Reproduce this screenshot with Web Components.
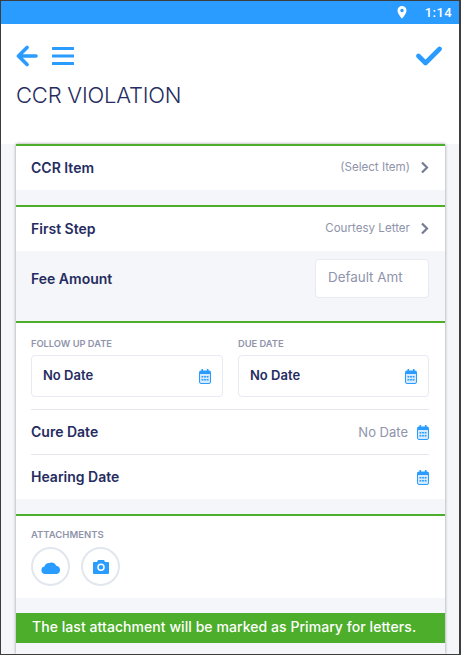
<!DOCTYPE html>
<html>
<head>
<meta charset="utf-8">
<title>CCR Violation</title>
<style>
  html, body { margin: 0; padding: 0; background: #fff; }
  body { font-family: "Inter", "Liberation Sans", sans-serif; color: #252c5f; }
</style>
</head>
<body>
<ccr-app>
  <status-bar slot="status" time="1:14"></status-bar>
  <app-header slot="header" heading="CCR VIOLATION"></app-header>

  <form-section>
    <nav-row label="CCR Item" value="(Select Item)"></nav-row>
  </form-section>

  <form-section flush>
    <nav-row label="First Step" value="Courtesy Letter"></nav-row>
    <fee-row label="Fee Amount" placeholder="Default Amt"></fee-row>
  </form-section>

  <form-section>
    <div style="display:grid;grid-template-columns:192px 191px;gap:15px;padding:0 16px 12px 15px;">
      <date-field label="FOLLOW UP DATE"></date-field>
      <date-field label="DUE DATE"></date-field>
    </div>
    <date-row label="Cure Date" value="No Date"></date-row>
    <date-row label="Hearing Date"></date-row>
  </form-section>

  <form-section>
    <attach-box label="ATTACHMENTS"></attach-box>
  </form-section>

  <note-banner>The last attachment will be marked as Primary for letters.</note-banner>
</ccr-app>

<script>
const CAL = `<svg width="12" height="15" viewBox="0 0 12 15" style="display:block">
  <rect x="2.5" y="0" width="1.6" height="3" fill="#2a9bff"/><rect x="7.9" y="0" width="1.6" height="3" fill="#2a9bff"/>
  <rect x="0.5" y="2" width="11" height="12.5" rx="1.5" fill="#d3eaff" stroke="#2a9bff"/>
  <rect x="0.5" y="2" width="11" height="3" fill="#2a9bff"/>
  <g fill="#2a9bff">
    <rect x="2.5" y="7" width="1.8" height="1.5"/><rect x="5.1" y="7" width="1.8" height="1.5"/><rect x="7.7" y="7" width="1.8" height="1.5"/>
    <rect x="2.5" y="10" width="1.8" height="1.5"/><rect x="5.1" y="10" width="1.8" height="1.5"/><rect x="7.7" y="10" width="1.8" height="1.5"/>
  </g></svg>`;

const CHEVRON = `<svg width="9" height="13" viewBox="0 0 9 13" style="display:block">
  <path d="M2 1.5 L7 6.5 L2 11.5" fill="none" stroke="#767c96" stroke-width="2.2"/></svg>`;

// small helper so each element doesn't repeat the same 3 lines
class Base extends HTMLElement {
  render(html) {
    if (!this.shadowRoot) this.attachShadow({ mode: 'open' });
    this.shadowRoot.innerHTML = html;
  }
  attr(name) { return this.getAttribute(name) || ''; }
}

class CcrApp extends Base {
  connectedCallback() {
    this.render(`<style>
      :host { display: block; box-sizing: border-box; width: 461px; height: 655px; overflow: hidden;
        border: 1px solid #3d3d3d; border-right-width: 2px; background: #f5f6fa; }
      .top { background: #fff; }
      .body { display: flex; flex-direction: column; width: 429px; margin: 0 0 0 15px; height: 510px;
        background: #f5f6fa; box-shadow: 0 0 3px rgba(0,0,0,.4); }
    </style>
    <div class="top"><slot name="status"></slot><slot name="header"></slot></div>
    <div class="body"><slot></slot></div>`);
  }
}

class StatusBar extends Base {
  connectedCallback() {
    this.render(`<style>
      :host { display: flex; align-items: center; justify-content: flex-end; gap: 18px; height: 23px; padding-right: 7px;
        box-sizing: border-box; background: #2a9bff; color: #fff; font: 500 13px Roboto, sans-serif; letter-spacing: .4px; }
      svg { display: block; }
    </style>
    <svg width="10" height="13" viewBox="0 0 11 15"><path fill-rule="evenodd" fill="#fff" d="M5.5 0A5.2 5.2 0 0 0 .3 5.2C.3 9 5.5 14.6 5.5 14.6S10.7 9 10.7 5.2A5.2 5.2 0 0 0 5.5 0Zm0 7.2a2 2 0 1 1 0-4 2 2 0 0 1 0 4Z"/></svg>
    <span>${this.attr('time')}</span>`);
  }
}

class AppHeader extends Base {
  connectedCallback() {
    this.render(`<style>
      :host { display: block; box-sizing: border-box; height: 120px; padding: 21px 17px 0 15px; background: #fff; }
      .tools { display: flex; align-items: center; height: 22px; }
      .tools svg { display: block; }
      .menu { margin-left: 14px; }
      .check { margin-left: auto; }
      h1 { margin: 14px 0 0; font: 300 22px/28px Inter, sans-serif; color: #252c5f; letter-spacing: -.2px; }
    </style>
    <div class="tools">
      <svg width="22" height="22" viewBox="0 0 22 22"><path d="M20 11H3 M11 2.5 L2.5 11 L11 19.5" fill="none" stroke="#2a9bff" stroke-width="3.6" stroke-linecap="round" stroke-linejoin="round"/></svg>
      <svg class="menu" width="22" height="20" viewBox="0 0 22 20"><path d="M1 2.5H21 M1 10H21 M1 17.5H21" fill="none" stroke="#2a9bff" stroke-width="3" stroke-linecap="round"/></svg>
      <svg class="check" width="26" height="20" viewBox="0 0 26 20"><path d="M2.5 10 L9.5 17 L23.5 3" fill="none" stroke="#2a9bff" stroke-width="4.6" stroke-linecap="round" stroke-linejoin="round"/></svg>
    </div>
    <h1>${this.attr('heading')}</h1>`);
  }
}

class FormSection extends Base {
  connectedCallback() {
    this.render(`<style>
      :host { display: block; background: #fff; border-top: 2px solid #4cae2a; margin-bottom: 15px; }
      :host([flush]) { margin-bottom: 0; }
    </style><slot></slot>`);
  }
}

class NavRow extends Base {
  connectedCallback() {
    this.render(`<style>
      :host { display: flex; align-items: center; height: 44px; padding: 0 16px 2px 15px; box-sizing: border-box; background: #fff; }
      .l { font: 600 14px Inter, sans-serif; color: #252c5f; }
      .v { margin-left: auto; margin-right: 10px; font: 400 11.6px Inter, sans-serif; color: #8f94ab; }
    </style><span class="l">${this.attr('label')}</span><span class="v">${this.attr('value')}</span>${CHEVRON}`);
  }
}

class FeeRow extends Base {
  connectedCallback() {
    this.render(`<style>
      :host { display: flex; align-items: flex-start; justify-content: space-between; height: 70px; padding: 8px 16px 0 15px; box-sizing: border-box; background: #f5f6fa; }
      .l { margin-top: 11px; font: 600 14px/18px Inter, sans-serif; color: #252c5f; }
      .box { box-sizing: border-box; width: 114px; height: 39px; padding: 8px 12px; background: #fff; border: 1px solid #e8eaf2; border-radius: 4px;
        font: 400 13.4px/18px Inter, sans-serif; color: #8f94ab; }
    </style><span class="l">${this.attr('label')}</span><div class="box">${this.attr('placeholder')}</div>`);
  }
}

class DateField extends Base {
  connectedCallback() {
    this.render(`<style>
      :host { display: block; padding-top: 15px; }
      .cap { font: 600 9.3px/12px Inter, sans-serif; color: #8f94ab; margin-bottom: 5px; }
      .box { display: flex; align-items: center; justify-content: space-between; box-sizing: border-box; height: 42px; padding: 0 11px 0 11px;
        border: 1px solid #e8eaf2; border-radius: 4px; font: 600 13px Inter, sans-serif; color: #252c5f; }
      span { margin-bottom: 2px; }
    </style><div class="cap">${this.attr('label')}</div><div class="box"><span>No Date</span>${CAL}</div>`);
  }
}

class DateRow extends Base {
  connectedCallback() {
    const v = this.attr('value');
    this.render(`<style>
      :host { display: block; padding: 0 16px 0 15px; }
      .row { display: flex; align-items: center; height: 44px; border-top: 1px solid #e4e6ee; }
      .l { font: 600 14px Inter, sans-serif; color: #252c5f; margin-bottom: 2px; }
      .v { margin-left: auto; margin-right: 9px; font: 400 13px Inter, sans-serif; color: #8f94ab; }
      .i { margin-left: auto; }
      .v + .i { margin-left: 0; }
    </style><div class="row"><span class="l">${this.attr('label')}</span>${v ? `<span class="v">${v}</span>` : ''}<span class="i">${CAL}</span></div>`);
  }
}

class AttachBox extends Base {
  connectedCallback() {
    this.render(`<style>
      :host { display: block; padding: 13px 15px 12px; }
      .cap { font: 600 9.5px/12px Inter, sans-serif; color: #8f94ab; margin-bottom: 6px; }
      .btns { display: flex; gap: 11px; }
      .c { display: flex; align-items: center; justify-content: center; box-sizing: border-box; width: 39px; height: 39px; border: 2px solid #e2e6ee; border-radius: 50%; }
    </style><div class="cap">${this.attr('label')}</div>
    <div class="btns">
      <div class="c"><svg width="20" height="14" viewBox="0 0 20 14"><path fill="#2a9bff" d="M4 14A3.8 3.8 0 0 1 3.4 6.5 4.8 4.8 0 0 1 8 3 5.2 5.2 0 0 1 15.3 5.8 4.2 4.2 0 0 1 16 14Z"/></svg></div>
      <div class="c"><svg width="16" height="14" viewBox="0 0 16 14"><path fill-rule="evenodd" fill="#2a9bff" d="M1 2H4L5 0H11L12 2H15A1 1 0 0 1 16 3V13A1 1 0 0 1 15 14H1A1 1 0 0 1 0 13V3A1 1 0 0 1 1 2ZM8 3.5A3.7 3.7 0 1 0 8 11A3.7 3.7 0 0 0 8 3.5ZM8 5A2.3 2.3 0 1 1 8 9.6A2.3 2.3 0 0 1 8 5Z"/></svg></div>
    </div>`);
  }
}

class NoteBanner extends Base {
  connectedCallback() {
    this.render(`<style>
      :host { display: block; height: 30px; box-sizing: border-box; padding: 0 16px; background: #4cae2a; color: #fff; font: 500 14px/28px Inter, sans-serif; letter-spacing: .06px; white-space: nowrap; }
    </style><slot></slot>`);
  }
}

customElements.define('ccr-app', CcrApp);
customElements.define('status-bar', StatusBar);
customElements.define('app-header', AppHeader);
customElements.define('form-section', FormSection);
customElements.define('nav-row', NavRow);
customElements.define('fee-row', FeeRow);
customElements.define('date-field', DateField);
customElements.define('date-row', DateRow);
customElements.define('attach-box', AttachBox);
customElements.define('note-banner', NoteBanner);
</script>
</body>
</html>
